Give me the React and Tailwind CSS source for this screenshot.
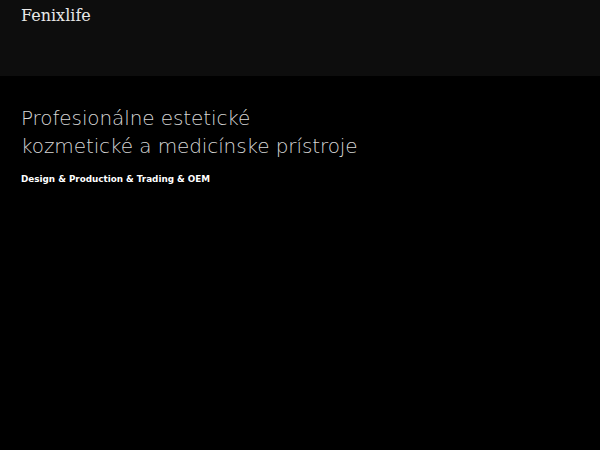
export default function App() {
  return (
    <div className="w-[600px] h-[450px] bg-black overflow-hidden">
      <header className="h-[76px] bg-[#0d0d0d] px-[21px] pt-[6px]">
        <div className="text-[16px] leading-[20px] text-[#e8e8e8]" style={{ fontFamily: '"DejaVu Serif", serif' }}>Fenixlife</div>
      </header>
      <main className="px-[21px] pt-[28px]" style={{ fontFamily: '"DejaVu Sans", sans-serif' }}>
        <h1 className="text-[20px] leading-[28px] font-extralight text-[#d6d6d6] tracking-[-0.1px]">
          Profesionálne estetické<br />kozmetické a medicínske prístroje
        </h1>
        <p className="mt-[13px] text-[8.8px] leading-[12px] font-bold text-white">Design &amp; Production &amp; Trading &amp; OEM</p>
      </main>
    </div>
  );
}
